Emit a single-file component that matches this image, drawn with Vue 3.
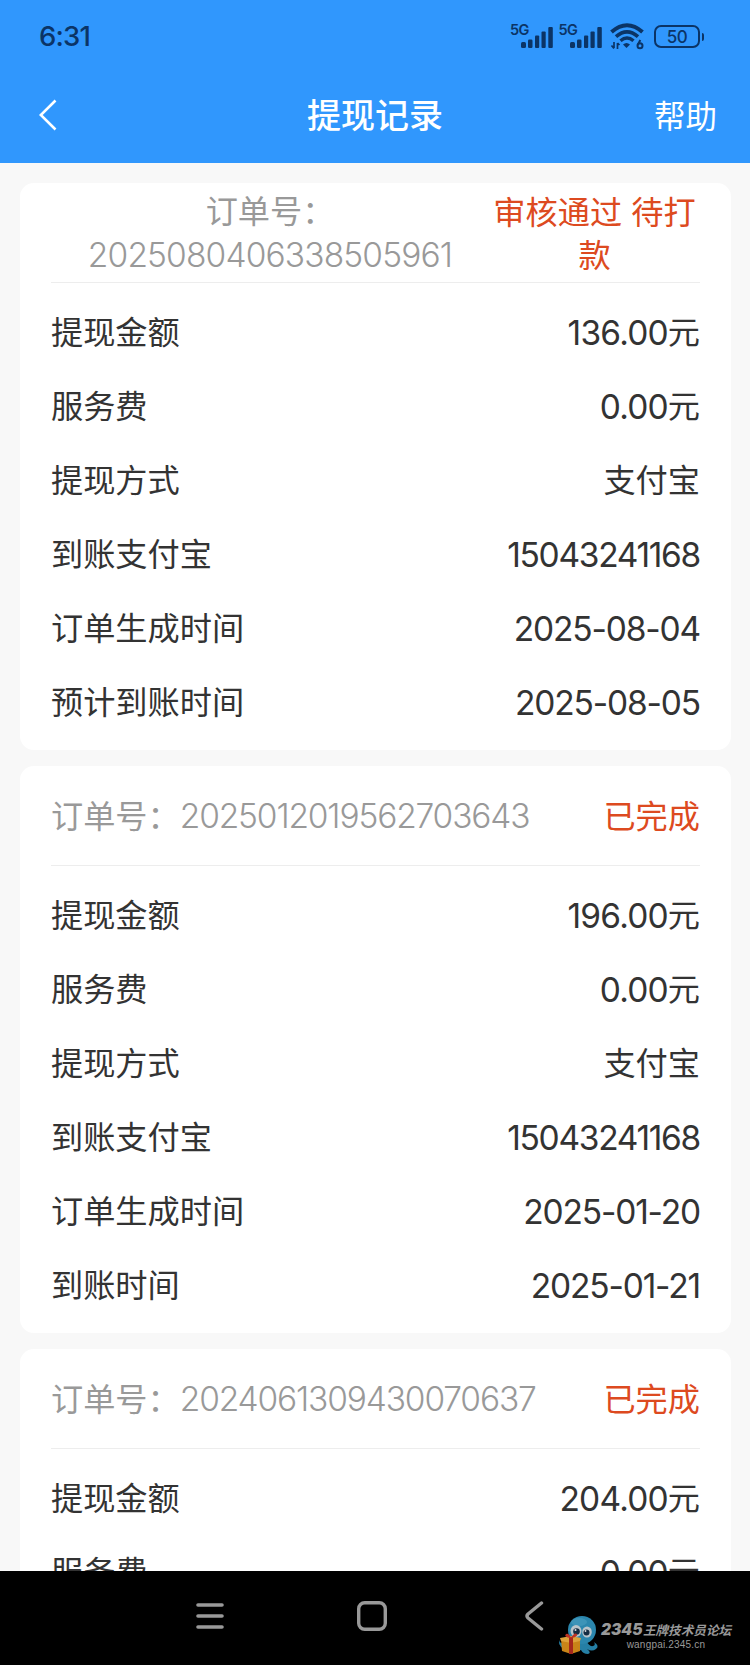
<script setup>
import { ref } from "vue";

const records = ref([
  {
    orderNo: "2025080406338505961",
    status: "审核通过 待打款",
    wrapped: true,
    rows: [
      { label: "提现金额", value: "136.00", unit: "元" },
      { label: "服务费", value: "0.00", unit: "元" },
      { label: "提现方式", unit: "支付宝" },
      { label: "到账支付宝", value: "15043241168", type: "account" },
      { label: "订单生成时间", value: "2025-08-04", type: "date" },
      { label: "预计到账时间", value: "2025-08-05", type: "date" },
    ],
  },
  {
    orderNo: "2025012019562703643",
    status: "已完成",
    rows: [
      { label: "提现金额", value: "196.00", unit: "元" },
      { label: "服务费", value: "0.00", unit: "元" },
      { label: "提现方式", unit: "支付宝" },
      { label: "到账支付宝", value: "15043241168", type: "account" },
      { label: "订单生成时间", value: "2025-01-20", type: "date" },
      { label: "到账时间", value: "2025-01-21", type: "date" },
    ],
  },
  {
    orderNo: "2024061309430070637",
    status: "已完成",
    rows: [
      { label: "提现金额", value: "204.00", unit: "元" },
      { label: "服务费", value: "0.00", unit: "元" },
    ],
  },
]);
</script>

<template>
  <div class="page">
    <header class="header">
      <div class="status-bar">
        <span class="clock">6:31</span>
        <div class="status-icons">
          <div v-for="n in 2" :key="n" class="signal">
            <span class="network">5G</span>
            <svg width="32" height="21" viewBox="0 0 32 21" fill="#0b3466">
              <rect x="0" y="15" width="5" height="6" rx="1.5" />
              <rect x="7" y="12.5" width="4.5" height="8.5" rx="1.2" />
              <rect x="14" y="8.5" width="4.2" height="12.5" rx="1" />
              <rect x="20.5" y="4.5" width="4.2" height="16.5" rx="1" />
              <rect x="27.3" y="0" width="4.5" height="21" rx="1" />
            </svg>
          </div>
          <svg class="wifi" width="34" height="27" viewBox="0 0 34 27" fill="none" stroke="#0b3466">
            <path d="M1.500 9Q17-4.500 32.500 9" stroke-width="4" />
            <path d="M6 13.700Q17 4 28 13.700" stroke-width="3.600" />
            <path d="M10.500 17.800Q17 12 23.500 17.800" stroke-width="3.400" />
            <path d="M13 21.500Q16.500 18.500 20 21.500L16.500 25Z" fill="#0b3466" stroke="none" />
            <path d="M4 19V25M1.500 22.500L4 25.500M7.500 26V20M7.500 20L9.500 22" stroke-width="1.700" />
            <circle cx="30" cy="22.800" r="2.500" stroke-width="2" />
            <path d="M27.700 22L30.300 17" stroke-width="2" />
          </svg>
          <div class="battery">
            <span class="battery-level">50</span>
          </div>
        </div>
      </div>
      <nav class="nav-bar">
        <div class="nav-side">
          <svg class="back" width="18" height="32" viewBox="0 0 18 32" fill="none" stroke="#fff" stroke-width="2.6">
            <path d="M16.500 1.500L1.800 16L16.500 30.500" />
          </svg>
        </div>
        <h1 class="title">提现记录</h1>
        <div class="nav-side help">帮助</div>
      </nav>
    </header>

    <main class="list">
      <section v-for="record in records" :key="record.orderNo" class="card">
        <div class="card-head" :class="{ wrapped: record.wrapped }">
          <div class="order">
            <span>订单号：</span>
            <span class="num order-no">{{ record.orderNo }}</span>
          </div>
          <div class="status">{{ record.status }}</div>
        </div>
        <div class="card-body">
          <div v-for="row in record.rows" :key="row.label" class="row">
            <span class="label">{{ row.label }}</span>
            <span class="value">
              <span v-if="row.value" class="num" :class="row.type">{{ row.value }}</span>
              <span v-if="row.unit" class="label">{{ row.unit }}</span>
            </span>
          </div>
        </div>
      </section>
    </main>

    <footer class="system-nav">
      <svg width="28" height="28" viewBox="0 0 28 28" stroke="#999" stroke-width="3.600" stroke-linecap="round">
        <path d="M2 3H26M2 14H26M2 25H26" />
      </svg>
      <svg width="30" height="30" viewBox="0 0 30 30" fill="none" stroke="#999" stroke-width="3.400">
        <rect x="1.700" y="1.700" width="26.600" height="26.600" rx="6" />
      </svg>
      <svg width="19" height="30" viewBox="0 0 19 30" fill="none" stroke="#999" stroke-width="3.400" stroke-linecap="round" stroke-linejoin="round">
        <path d="M16.500 2L3 13Q1 15 3 17L16.500 28" />
      </svg>
      <div class="watermark">
        <svg width="42" height="42" viewBox="0 0 42 42">
          <path d="M10 28Q2 30 1 25Q0 33 10 35ZM28 25Q31 32 35 31Q38 30 36 27Q42 31 38 34Q34 37 29 34Q34 38 30 39Q25 39 23 35L14 38Q8 39 12 30Z" fill="#257fa5" />
          <circle cx="24" cy="15" r="14" fill="#2b86ad" />
          <ellipse cx="21" cy="7" rx="8" ry="4" fill="#4a9fc0" opacity="0.6" />
          <ellipse cx="18" cy="16" rx="5.500" ry="6" fill="#b9c4ca" />
          <ellipse cx="29" cy="17" rx="4.800" ry="5.500" fill="#b9c4ca" />
          <circle cx="18.500" cy="16.500" r="3.300" fill="#152d43" />
          <circle cx="28.500" cy="17.500" r="3" fill="#152d43" />
          <circle cx="17.500" cy="15" r="1" fill="#ddd" />
          <circle cx="27.500" cy="16" r="0.900" fill="#ddd" />
          <path d="M3 24L13 22L22 24V36L13 39L4 36Z" fill="#c98418" />
          <path d="M2 23L13 21L23 23L22 26L13 28L3 26Z" fill="#dda23a" />
          <path d="M11 22H15V39H11Z" fill="#a5281c" />
          <path d="M13 23Q5 22 8 19Q11 18 13 23Q16 17 19 19Q20 22 13 23Z" fill="#bd3424" />
        </svg>
        <div class="watermark-text">
          <span class="forum"><span class="forum-num">2345</span>王牌技术员论坛</span>
          <span class="site">wangpai.2345.cn</span>
        </div>
      </div>
    </footer>
  </div>
</template>

<style>
body {
  margin: 0;
  overflow: hidden;
}
</style>

<style scoped>
.page {
  display: flex;
  flex-direction: column;
  width: 750px;
  height: 1665px;
  overflow: hidden;
  background-color: #f8f8f8;
  color: #333;
  font-family: "Noto Sans CJK SC", sans-serif;
  font-size: 32.2px;
}

.header {
  flex: none;
  height: 163px;
  background-color: #3097fd;
}

.status-bar {
  display: flex;
  align-items: center;
  justify-content: space-between;
  box-sizing: border-box;
  height: 73px;
  padding: 0 50px 0 39px;
  color: #0b3466;
  font-family: Inter, sans-serif;
}

.clock {
  font-size: 27.5px;
  font-weight: 500;
  letter-spacing: -0.8px;
  line-height: 73px;
}

.status-icons {
  display: flex;
  align-items: center;
}

.signal {
  position: relative;
  width: 43px;
  height: 24px;
  margin-right: 5.5px;
}

.signal svg {
  display: block;
  margin: 2px 0 0 11px;
}

.network {
  position: absolute;
  top: -2px;
  left: 0;
  font-size: 14.5px;
  font-weight: 600;
  letter-spacing: -0.5px;
  line-height: 14px;
}

.wifi {
  margin: 0 10px 0 3px;
}

.battery {
  position: relative;
  display: flex;
  align-items: center;
  justify-content: center;
  box-sizing: border-box;
  width: 46px;
  height: 23px;
  border: 2.5px solid #0b3466;
  border-radius: 7px;
}

.battery::after {
  content: "";
  position: absolute;
  right: -6px;
  width: 2.5px;
  height: 8px;
  border-radius: 0 2px 2px 0;
  background-color: #0b3466;
}

.battery-level {
  font-size: 17px;
  font-weight: 500;
  letter-spacing: -0.5px;
  line-height: 18px;
}

.nav-bar {
  display: flex;
  align-items: center;
  height: 84px;
  padding: 0 33px 0 39px;
  color: #fff;
}

.nav-side {
  width: 100px;
}

.back {
  display: block;
}

.help {
  font-size: 31.5px;
  line-height: 82px;
  padding-bottom: 2px;
  text-align: right;
}

.title {
  flex: 1;
  margin: 0;
  padding: 0 6px 2px 0;
  font-size: 34px;
  font-weight: 500;
  line-height: 82px;
  text-align: center;
}

.list {
  flex: 1;
  min-height: 0;
  padding: 20px 19px 0 20px;
  overflow: hidden;
}

.card {
  height: 567px;
  margin-bottom: 16px;
  border-radius: 14px;
  background-color: #fff;
}

.card-head {
  display: flex;
  align-items: center;
  justify-content: space-between;
  box-sizing: border-box;
  height: 100px;
  margin: 0 31px;
  padding-bottom: 3px;
  border-bottom: 1px solid #ededed;
}

.card-head.wrapped {
  padding-bottom: 1px;
}

.order {
  display: flex;
  align-items: center;
  color: #999;
}

.order .num {
  padding-top: 4px;
}

.order-no {
  letter-spacing: -1.15px;
}

.status {
  color: #dd4a20;
}

.wrapped .order {
  flex-direction: column;
  width: 438px;
  line-height: 42px;
}

.wrapped .order-no {
  letter-spacing: -0.85px;
}

.wrapped .status {
  width: 211px;
  line-height: 43px;
  text-align: center;
  word-spacing: 2px;
}

.num {
  font-family: Inter, sans-serif;
  font-size: 33.5px;
  font-weight: 300;
  white-space: nowrap;
}

.card-body {
  padding: 13px 31px 0;
}

.row {
  display: flex;
  align-items: center;
  justify-content: space-between;
  height: 74px;
  line-height: 48px;
}

.label {
  padding-bottom: 7px;
}

.value {
  display: flex;
  align-items: center;
}

.row .num {
  font-weight: 400;
  letter-spacing: -0.8px;
}

.row .account {
  letter-spacing: -1.3px;
}

.row .date {
  letter-spacing: -1.15px;
}

.system-nav {
  position: relative;
  display: flex;
  flex: none;
  align-items: center;
  box-sizing: border-box;
  height: 94px;
  padding: 0 0 5px 196px;
  background-color: #000;
}

.system-nav > svg:nth-child(2) {
  margin-left: 133px;
}

.system-nav > svg:nth-child(3) {
  margin-left: 138px;
}

.watermark {
  position: absolute;
  left: 558px;
  top: 44px;
  display: flex;
}

.watermark-text {
  display: flex;
  flex-direction: column;
  align-items: center;
  width: 132px;
  padding-top: 8px;
}

.forum {
  color: #999;
  font-size: 12.6px;
  font-style: italic;
  font-weight: 700;
  line-height: 14px;
  white-space: nowrap;
}

.forum-num {
  display: inline-block;
  width: 42px;
  font-family: Inter, sans-serif;
  font-size: 15.5px;
  font-weight: 900;
}

.site {
  color: #999;
  font-family: "Liberation Sans", sans-serif;
  font-size: 10px;
  letter-spacing: 0.2px;
  line-height: 15px;
}
</style>
